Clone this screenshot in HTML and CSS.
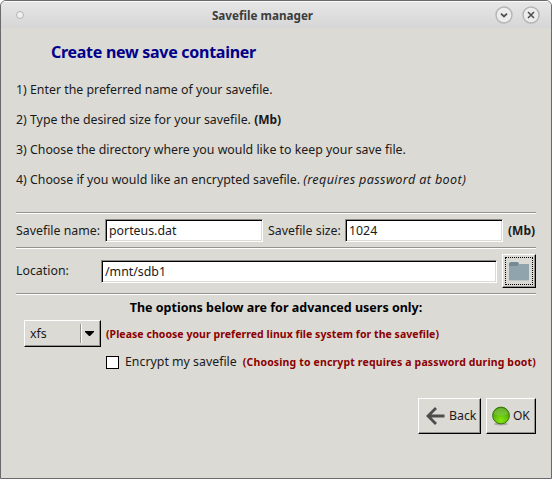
FILE: index.html
```html
<!DOCTYPE html>
<html lang="en">
<head>
<meta charset="utf-8">
<title>Savefile manager</title>
<link rel="stylesheet" href="styles.css">
</head>
<body>
<main class="window">
  <header class="titlebar">
    <span class="menu-dot"></span>
    <span class="title">Savefile manager</span>
    <span class="controls">
      <svg class="control" viewBox="0 0 18 18"><circle cx="9" cy="9" r="8" fill="#ececec" stroke="#b4b4b4" stroke-width="1.4"/><path d="M6 7.7l3 2.8 3-2.8" fill="none" stroke="#505050" stroke-width="1.8"/></svg>
      <svg class="control" viewBox="0 0 18 18"><circle cx="9" cy="9" r="8" fill="#ececec" stroke="#b4b4b4" stroke-width="1.4"/><path d="M6 6l6 6M12 6l-6 6" fill="none" stroke="#505050" stroke-width="1.6"/></svg>
    </span>
  </header>
  <section class="content">
    <h1 class="heading"><span>Create new save container</span></h1>
    <p class="step">1) Enter the preferred name of your savefile.</p>
    <p class="step">2) Type the desired size for your savefile. <b>(Mb)</b></p>
    <p class="step">3) Choose the directory where you would like to keep your save file.</p>
    <p class="step last">4) Choose if you would like an encrypted savefile. <i>(requires password at boot)</i></p>
    <div class="rule"></div>
    <div class="row fields">
      <span class="label name-label">Savefile name:</span>
      <span class="input">porteus.dat</span>
      <span class="label size-label">Savefile size:</span>
      <span class="input">1024</span>
      <b class="unit">(Mb)</b>
    </div>
    <div class="rule"></div>
    <div class="row location">
      <span class="label location-label">Location:</span>
      <span class="input wide">/mnt/sdb1</span>
      <span class="button browse"><span class="focus">
        <svg width="20" height="19" viewBox="0 0 20 19"><path d="M0 4h9l1-2h10v16H0z" fill="#90a4ae"/><path d="M0 4V2q0-2 2-2h6q2 0 2 2l-1 2z" fill="#728c96"/><path d="M0 18h20v.7H0z" fill="#b5bfc3"/></svg>
      </span></span>
    </div>
    <div class="rule"></div>
    <p class="advanced"><span>The options below are for advanced users only:</span></p>
    <div class="row filesystem">
      <span class="button combo"><span class="value">xfs</span><span class="divider"></span><svg width="9" height="5" viewBox="0 0 9 5"><path d="M0 0h9v1L5 5H4L0 1z" fill="#000"/></svg></span>
      <b class="note fs-note">(Please choose your preferred linux file system for the savefile)</b>
    </div>
    <div class="row encrypt">
      <span class="checkbox"></span>
      <span class="label encrypt-label">Encrypt my savefile</span>
      <b class="note enc-note">(Choosing to encrypt requires a password during boot)</b>
    </div>
    <div class="row actions">
      <span class="button back">
        <svg width="19" height="18" viewBox="0 0 19 18"><path d="M10 1L2 9l8 8M2.5 9H18.5" fill="none" stroke="#4d4d4d" stroke-width="2.8"/></svg>
        <span class="back-label">Back</span>
      </span>
      <span class="button ok">
        <svg width="20" height="20" viewBox="0 0 20 20"><defs><radialGradient id="g" cx=".5" cy=".8" r=".7"><stop offset="0" stop-color="#86e60c"/><stop offset=".6" stop-color="#61be0a"/><stop offset="1" stop-color="#469908"/></radialGradient></defs><ellipse cx="9" cy="18" rx="7" ry="1.5" fill="#aaa9a5"/><circle cx="9" cy="9.500" r="8.400" fill="url(#g)" stroke="#397613"/><path d="M2 8a7 6 0 0 1 14 0q-7 3-14 0z" fill="#8bcb50" opacity=".55"/></svg>
        <span class="ok-label">OK</span>
      </span>
    </div>
  </section>
</main>
</body>
</html>
```
FILE: styles.css
```css
* { box-sizing: border-box; }
body {
  margin: 0;
  background: #fff;
  color: #1a1a1a;
  font: 12.35px/16px "Noto Sans", "Open Sans", sans-serif;
  white-space: nowrap;
}
.window {
  width: 552px;
  height: 479px;
  border: 1px solid #6b696b;
  border-radius: 6px 6px 0 0;
  background: #dcdad5;
  overflow: hidden;
}
.titlebar {
  display: grid;
  grid-template-columns: 60px 1fr 60px;
  align-items: center;
  height: 27px;
  border-top: 1px solid #fafafa;
  background: linear-gradient(#e6e6e6, #d6d6d6);
}
.menu-dot {
  width: 8px;
  height: 8px;
  margin-left: 15px;
  border: 1px solid #b4b4b4;
  border-radius: 50%;
  background: #f0f0f0;
}
.title { margin-right: 27px; padding-bottom: 1px; text-align: center; color: #3c3c3c; font-size: 11.7px; font-weight: 700; }
.controls { display: flex; gap: 9px; margin-left: 4px; }
.control { width: 18px; height: 18px; }
.content { padding: 13px 15px 0; }
.heading { margin: 0 0 19px 35px; font-size: 16px; line-height: 22px; letter-spacing: -.28px; color: #00008b; }
.step { margin: 0 0 14px; }
.step b { font-size: 12px; }
.step i { font-size: 12.6px; letter-spacing: .36px; }
.last { margin-bottom: 24px; }
.rule { height: 2px; border-top: 1px solid #95938f; border-bottom: 1px solid #fff; }
.row { display: flex; align-items: center; }
.fields { height: 33px; }
.name-label { width: 89px; }
.size-label { width: 77px; margin-left: 5px; }
.input {
  width: 158px;
  height: 23px;
  padding: 1px 3px;
  border: 1px solid;
  border-color: #8b8985 #fff #fff #8b8985;
  background: #fff;
  box-shadow: inset 1px 1px #000, inset -1px -1px #dcdad5;
  line-height: 20px;
}
.unit { margin-left: 5px; font-size: 12px; }
.location { height: 44px; }
.location-label { width: 85px; }
.wide { width: 396px; }
.button {
  display: flex;
  align-items: center;
  border: 1px solid;
  border-color: #fff #000 #000 #fff;
  box-shadow: inset -1px -1px #95938f;
}
.browse { width: 34px; height: 34px; margin-left: 5px; padding: 2px; }
.focus { display: flex; width: 28px; height: 28px; border: 1px dotted #000; align-items: center; justify-content: center; }
.advanced { margin: 5px 0 4px; text-align: center; font-size: 12.5px; font-weight: 700; color: #000; }
.filesystem { height: 27px; margin-left: 8px; }
.combo { width: 77px; height: 27px; padding-left: 5px; }
.value { width: 50px; }
.divider { width: 2px; height: 19px; margin-right: 3px; border-left: 1px solid #95938f; border-right: 1px solid #fff; }
.note { color: #8b0000; font-size: 10.5px; }
.fs-note { margin-left: 5px; letter-spacing: .05px; }
.enc-note { letter-spacing: .15px; }
.encrypt { height: 16px; margin: 7px 0 0 90px; }
.checkbox { width: 13px; height: 13px; border: 1px solid #000; background: #fff; }
.encrypt-label { width: 118px; margin-left: 6px; }
.actions { justify-content: flex-end; gap: 5px; margin-top: 28px; }
.back, .ok { height: 36px; }
.back { width: 63px; padding-left: 7px; gap: 4px; }
.ok { width: 50px; padding-left: 5px; gap: 1px; }
.ok-label { font-size: 12px; }
```
